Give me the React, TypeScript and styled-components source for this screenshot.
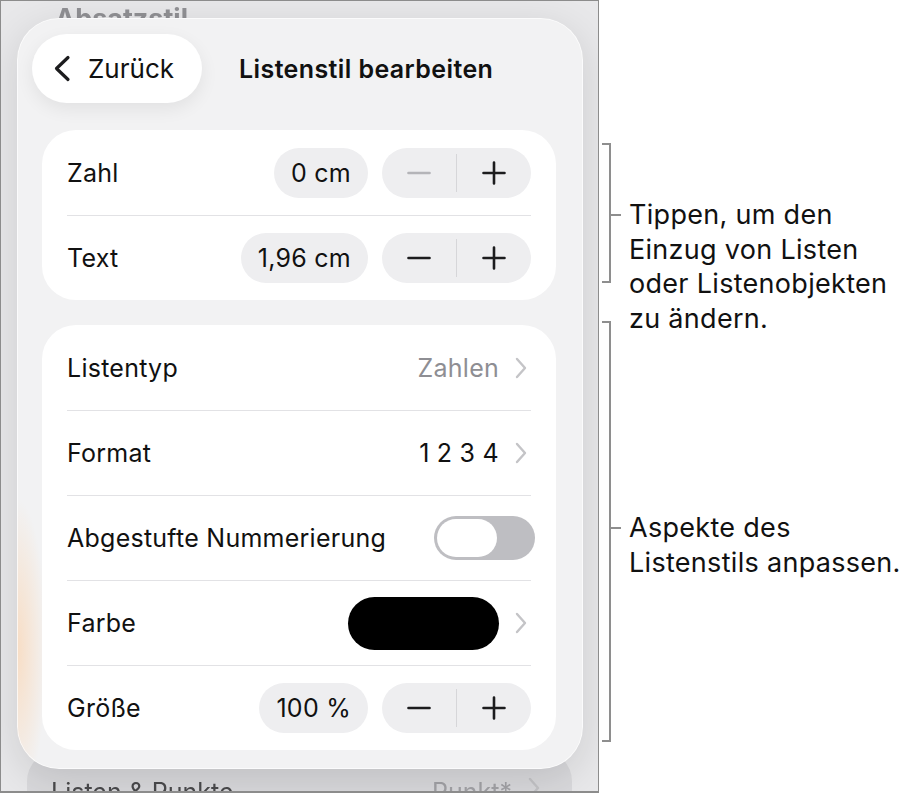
import React from "react";
import styled, { createGlobalStyle } from "styled-components";

const GlobalStyle = createGlobalStyle`
  html, body {
    margin: 0;
    padding: 0;
    background: #fff;
  }
  body {
    font-family: Inter, "Noto Sans", sans-serif;
    -webkit-font-smoothing: antialiased;
  }
`;

const Page = styled.div`
  display: flex;
  width: 902px;
  height: 793px;
  background: #fff;
`;

/* ---------- device screen ---------- */

const Screen = styled.div`
  position: relative;
  flex: none;
  width: 599px;
  height: 793px;
  box-sizing: border-box;
  border: 1px solid #8c8c8c;
  border-bottom-width: 2px;
  overflow: hidden;
  background: #e8e8ea;
`;

const Backdrop = styled.div`
  display: flex;
  flex-direction: column;
  justify-content: space-between;
  height: 100%;
  filter: blur(0.6px);
`;

const BackdropTitle = styled.div`
  padding: 1px 0 0 54px;
  font-size: 27px;
  font-weight: 700;
  color: #909094;
`;

const BackdropRow = styled.div`
  display: flex;
  align-items: flex-start;
  gap: 14px;
  flex: none;
  height: 36px;
  margin: 0 26px -22px;
  padding: 26px 28px 0 24px;
  border-radius: 30px 30px 0 0;
  background: #d9d9dc;
  font-size: 25px;
  color: #4a4a4c;
`;

const BackdropValue = styled.span`
  margin-left: auto;
  color: #a2a2a6;
`;

const Sheet = styled.section`
  position: absolute;
  top: 17px;
  left: 16px;
  width: 566px;
  height: 751px;
  box-sizing: border-box;
  display: flex;
  flex-direction: column;
  gap: 25px;
  padding: 16px 27px 0 25px;
  border-radius: 42px;
  background:
    radial-gradient(30px 150px at 0 84%, rgba(255, 196, 140, 0.45), transparent),
    #f2f2f3;
  box-shadow:
    0 10px 40px rgba(0, 0, 0, 0.12),
    inset 0 0 0 1px rgba(255, 255, 255, 0.7);
`;

const Header = styled.header`
  display: flex;
  align-items: center;
  gap: 37px;
  margin: 0 0 2px -10px;
`;

const BackButton = styled.button`
  display: flex;
  align-items: center;
  gap: 17px;
  height: 69px;
  padding: 0 28px 0 21px;
  border: none;
  border-radius: 35px;
  background: #fff;
  box-shadow: 0 6px 18px rgba(0, 0, 0, 0.07);
  font-family: inherit;
  font-size: 26px;
  color: #111;
`;

const Title = styled.h1`
  margin: 0;
  font-size: 25px;
  font-weight: 600;
  letter-spacing: 0.4px;
  color: #111;
`;

const Card = styled.div`
  display: flex;
  flex-direction: column;
  padding: 0 25px;
  border-radius: 34px;
  background: #fff;
`;

const Row = styled.div`
  display: flex;
  align-items: center;
  gap: 14px;
  height: 85px;
  box-sizing: border-box;
  font-size: 25px;
  letter-spacing: 0.25px;
  color: #111;

  & + & {
    border-top: 1px solid #e2e2e5;
  }
`;

const Label = styled.span`
  flex: 1;
`;

const Value = styled.span<{ $muted?: boolean }>`
  color: ${(p) => (p.$muted ? "#8e8e93" : "#111")};
`;

const Pill = styled.span`
  display: flex;
  align-items: center;
  height: 50px;
  padding: 0 17px;
  border-radius: 25px;
  background: #eeeef0;
`;

const Stepper = styled.div`
  display: flex;
  align-items: center;
  width: 149px;
  height: 50px;
  border-radius: 25px;
  background: #eeeef0;
`;

const StepButton = styled.span`
  flex: 1;
  display: flex;
  align-items: center;
  justify-content: center;
  height: 100%;
`;

const StepDivider = styled.span`
  width: 1px;
  height: 38px;
  background: #d6d6d9;
`;

const Toggle = styled.span`
  display: flex;
  width: 101px;
  height: 44px;
  box-sizing: border-box;
  padding: 3px;
  margin-right: -4px;
  border-radius: 22px;
  background: #bebec2;
`;

const Thumb = styled.span`
  width: 60px;
  height: 38px;
  border-radius: 19px;
  background: #fff;
`;

const Swatch = styled.span<{ $color: string }>`
  width: 151px;
  height: 53px;
  border-radius: 27px;
  background: ${(p) => p.$color};
`;

const Disclosure = styled.svg`
  flex: none;
  margin: 0 4px 0 2px;
`;

/* ---------- callouts ---------- */

const Notes = styled.aside`
  flex: 1;
  display: flex;
  flex-direction: column;
  gap: 38px;
  padding: 143px 0 0 3px;
  font-size: 27px;
  letter-spacing: 0.3px;
  line-height: 34.5px;
  color: #111;
`;

const Callout = styled.div<{ $span: number }>`
  display: flex;
  align-items: flex-start;
  height: ${(p) => p.$span}px;
`;

const Bracket = styled.span`
  flex: none;
  width: 9px;
  height: 100%;
  box-sizing: border-box;
  border: 2px solid #8e8e8e;
  border-left: none;
`;

const Note = styled.div<{ $tick: number }>`
  display: flex;
  align-items: flex-start;
  margin-top: ${(p) => p.$tick - 17}px;
  white-space: nowrap;
`;

const Tick = styled.span`
  flex: none;
  width: 10px;
  height: 2px;
  margin: 16px 8px 0 0;
  background: #8e8e8e;
`;

/* ---------- icons ---------- */

const ChevronLeft = () => (
  <svg width="18" height="27" viewBox="0 0 18 27">
    <path d="M15 2.5 L3.5 13.5 L15 24.5" fill="none" stroke="#1c1c1e" strokeWidth="3.2" strokeLinecap="round" strokeLinejoin="round" />
  </svg>
);

const ChevronRight = () => (
  <Disclosure width="12" height="22" viewBox="0 0 12 22">
    <path d="M2 2 L10 11 L2 20" fill="none" stroke="#c4c4c7" strokeWidth="2.4" strokeLinecap="round" strokeLinejoin="round" />
  </Disclosure>
);

const Minus = ({ disabled }: { disabled?: boolean }) => (
  <svg width="24" height="24" viewBox="0 0 24 24">
    <path d="M1.5 12 H22.5" stroke={disabled ? "#b4b4b8" : "#1c1c1e"} strokeWidth="2.6" strokeLinecap="round" />
  </svg>
);

const Plus = () => (
  <svg width="24" height="24" viewBox="0 0 24 24">
    <path d="M1.5 12 H22.5 M12 1.5 V22.5" stroke="#1c1c1e" strokeWidth="2.6" strokeLinecap="round" />
  </svg>
);

const Steps = ({ minDisabled }: { minDisabled?: boolean }) => (
  <Stepper>
    <StepButton>
      <Minus disabled={minDisabled} />
    </StepButton>
    <StepDivider />
    <StepButton>
      <Plus />
    </StepButton>
  </Stepper>
);

export default function App() {
  return (
    <Page>
      <GlobalStyle />
      <Screen>
        <Backdrop>
          <BackdropTitle>Absatzstil</BackdropTitle>
          <BackdropRow>
            <span>Listen &amp; Punkte</span>
            <BackdropValue>Punkt*</BackdropValue>
            <ChevronRight />
          </BackdropRow>
        </Backdrop>

        <Sheet>
          <Header>
            <BackButton>
              <ChevronLeft />
              Zurück
            </BackButton>
            <Title>Listenstil bearbeiten</Title>
          </Header>

          <Card>
            <Row>
              <Label>Zahl</Label>
              <Pill>0 cm</Pill>
              <Steps minDisabled />
            </Row>
            <Row>
              <Label>Text</Label>
              <Pill>1,96 cm</Pill>
              <Steps />
            </Row>
          </Card>

          <Card>
            <Row>
              <Label>Listentyp</Label>
              <Value $muted>Zahlen</Value>
              <ChevronRight />
            </Row>
            <Row>
              <Label>Format</Label>
              <Value>1 2 3 4</Value>
              <ChevronRight />
            </Row>
            <Row>
              <Label>Abgestufte Nummerierung</Label>
              <Toggle>
                <Thumb />
              </Toggle>
            </Row>
            <Row>
              <Label>Farbe</Label>
              <Swatch $color="#000" />
              <ChevronRight />
            </Row>
            <Row>
              <Label>Größe</Label>
              <Pill>100 %</Pill>
              <Steps />
            </Row>
          </Card>
        </Sheet>
      </Screen>

      <Notes>
        <Callout $span={140}>
          <Bracket />
          <Note $tick={72}>
            <Tick />
            <span>
              Tippen, um den
              <br />
              Einzug von Listen
              <br />
              oder Listenobjekten
              <br />
              zu ändern.
            </span>
          </Note>
        </Callout>
        <Callout $span={421}>
          <Bracket />
          <Note $tick={207}>
            <Tick />
            <span>
              Aspekte des
              <br />
              Listenstils anpassen.
            </span>
          </Note>
        </Callout>
      </Notes>
    </Page>
  );
}
